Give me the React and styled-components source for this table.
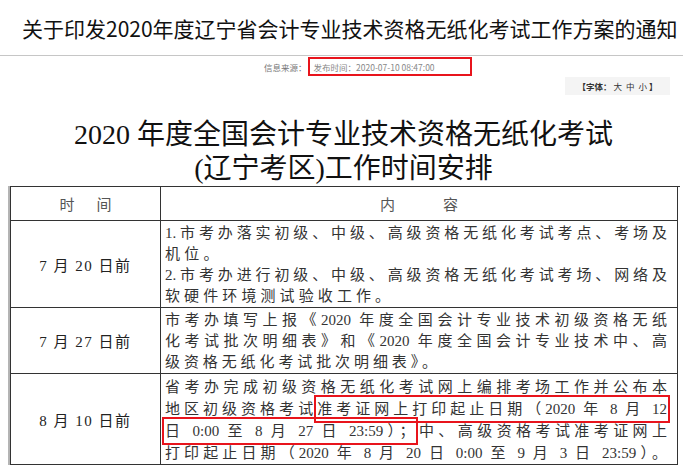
import React from "react";
import styled, { createGlobalStyle } from "styled-components";

const GlobalStyle = createGlobalStyle`
  html, body {
    margin: 0;
    padding: 0;
    background: #fff;
  }
  body {
    font-family: "Noto Sans CJK SC", sans-serif;
    color: #222;
  }
`;

const Page = styled.div`
  width: 687px;
  height: 471px;
  overflow: hidden;
`;

const Title = styled.h1`
  margin: 13px 0 0 22px;
  font-size: 21px;
  line-height: 30px;
  font-weight: 400;
  color: #111;
  white-space: nowrap;
`;

const Rule = styled.hr`
  margin: 12px 0 0;
  width: 683px;
  height: 0;
  border: 0;
  border-top: 1px solid #c6c6c6;
`;

const MetaRow = styled.div`
  display: flex;
  align-items: center;
  height: 19px;
  margin-top: 1px;
  padding-left: 264px;
  font-size: 8.5px;
  color: #777;
`;

const DateBox = styled.div`
  display: flex;
  align-items: center;
  box-sizing: border-box;
  width: 164px;
  height: 19px;
  margin-left: 1px;
  padding-left: 4px;
  border: 2px solid #e8141c;
  color: #888;
`;

const FontBar = styled.div`
  display: flex;
  justify-content: flex-end;
  margin: 1px 17px 0 0;
`;

const FontSwitch = styled.div`
  display: flex;
  align-items: center;
  justify-content: center;
  width: 105px;
  height: 18px;
  background: #f4f4f4;
  font-size: 8.5px;
  color: #333;

  b {
    font-weight: 700;
  }
  span {
    margin: 0 2px;
  }
`;

const Heading = styled.h2`
  margin: 23px 0 0;
  font-family: "Liberation Serif", "Noto Sans CJK SC", serif;
  font-size: 28px;
  line-height: 34px;
  font-weight: 400;
  text-align: center;
  color: #111;
`;

const TableWrap = styled.div`
  margin-left: 8px;
  width: 670px;
  border-left: 2px solid #b4b4b4;
`;

const Grid = styled.div`
  display: grid;
  grid-template-columns: 150px 517px;
  border-top: 1px solid #333;
  border-left: 1px solid #333;
  font-family: "Liberation Serif", "Noto Sans CJK SC", serif;
  font-size: 15px;
`;

const Cell = styled.div`
  box-sizing: border-box;
  border-right: 1px solid #333;
  border-bottom: 1px solid #333;
`;

const HeadCell = styled(Cell)`
  display: flex;
  align-items: center;
  justify-content: center;
  height: 34px;
  color: #555;
  letter-spacing: ${(p) => p.$gap}px;
  padding-left: ${(p) => p.$gap}px;
`;

const DateCell = styled(Cell)`
  display: flex;
  align-items: center;
  justify-content: center;
  color: #222;
  letter-spacing: 1.5px;
`;

const TextCell = styled(Cell)`
  padding: 2px 10px 0 4px;
  line-height: ${(p) => p.$lh}px;
  color: #333;
`;

const Line = styled.div`
  text-align: ${(p) => (p.$full ? "justify" : "left")};
  text-align-last: ${(p) => (p.$full ? "justify" : "auto")};
  letter-spacing: ${(p) => (p.$full ? 0 : p.$ls || 4.3)}px;
`;

const Marked = styled.span`
  padding: 3px 0;
  outline: 2px solid #e8141c;
  outline-offset: 1px;
`;

const rows = [
  {
    date: "7 月 20 日前",
    lh: 21,
    lines: [
      { t: "1.市考办落实初级、中级、高级资格无纸化考试考点、考场及", full: true },
      { t: "机位。" },
      { t: "2.市考办进行初级、中级、高级资格无纸化考试考场、网络及", full: true },
      { t: "软硬件环境测试验收工作。", ls: 4.1 },
    ],
  },
  {
    date: "7 月 27 日前",
    lh: 21,
    lines: [
      { t: "市考办填写上报《2020 年度全国会计专业技术初级资格无纸", full: true },
      { t: "化考试批次明细表》和《2020 年度全国会计专业技术中、高", full: true },
      { t: "级资格无纸化考试批次明细表》。", ls: 3.9 },
    ],
  },
];

export default function App() {
  return (
    <Page>
      <GlobalStyle />
      <Title>关于印发2020年度辽宁省会计专业技术资格无纸化考试工作方案的通知</Title>
      <Rule />
      <MetaRow>
        <span>信息来源：</span>
        <DateBox>发布时间：2020-07-10 08:47:00</DateBox>
      </MetaRow>
      <FontBar>
        <FontSwitch>
          <b>【字体：</b>
          <span>大</span>
          <span>中</span>
          <span>小</span>
          <b>】</b>
        </FontSwitch>
      </FontBar>
      <Heading>
        2020 年度全国会计专业技术资格无纸化考试
        <br />
        (辽宁考区)工作时间安排
      </Heading>
      <TableWrap>
        <Grid>
          <HeadCell $gap={22}>时间</HeadCell>
          <HeadCell $gap={48}>内容</HeadCell>
          {rows.map((row) => (
            <React.Fragment key={row.date}>
              <DateCell>{row.date}</DateCell>
              <TextCell $lh={row.lh}>
                {row.lines.map((l) => (
                  <Line key={l.t} $full={l.full} $ls={l.ls}>
                    {l.t}
                  </Line>
                ))}
              </TextCell>
            </React.Fragment>
          ))}
          <DateCell>8 月 10 日前</DateCell>
          <TextCell $lh={22}>
            <Line $full>省考办完成初级资格无纸化考试网上编排考场工作并公布本</Line>
            <Line $full>
              地区初级资格考试<Marked>准考证网上打印起止日期（2020 年 8 月 12</Marked>
            </Line>
            <Line $full>
              <Marked>日 0:00 至 8 月 27 日 23:59）；</Marked>中、高级资格考试准考证网上
            </Line>
            <Line $full>打印起止日期（2020 年 8 月 20 日 0:00 至 9 月 3 日 23:59）。</Line>
          </TextCell>
        </Grid>
      </TableWrap>
    </Page>
  );
}
